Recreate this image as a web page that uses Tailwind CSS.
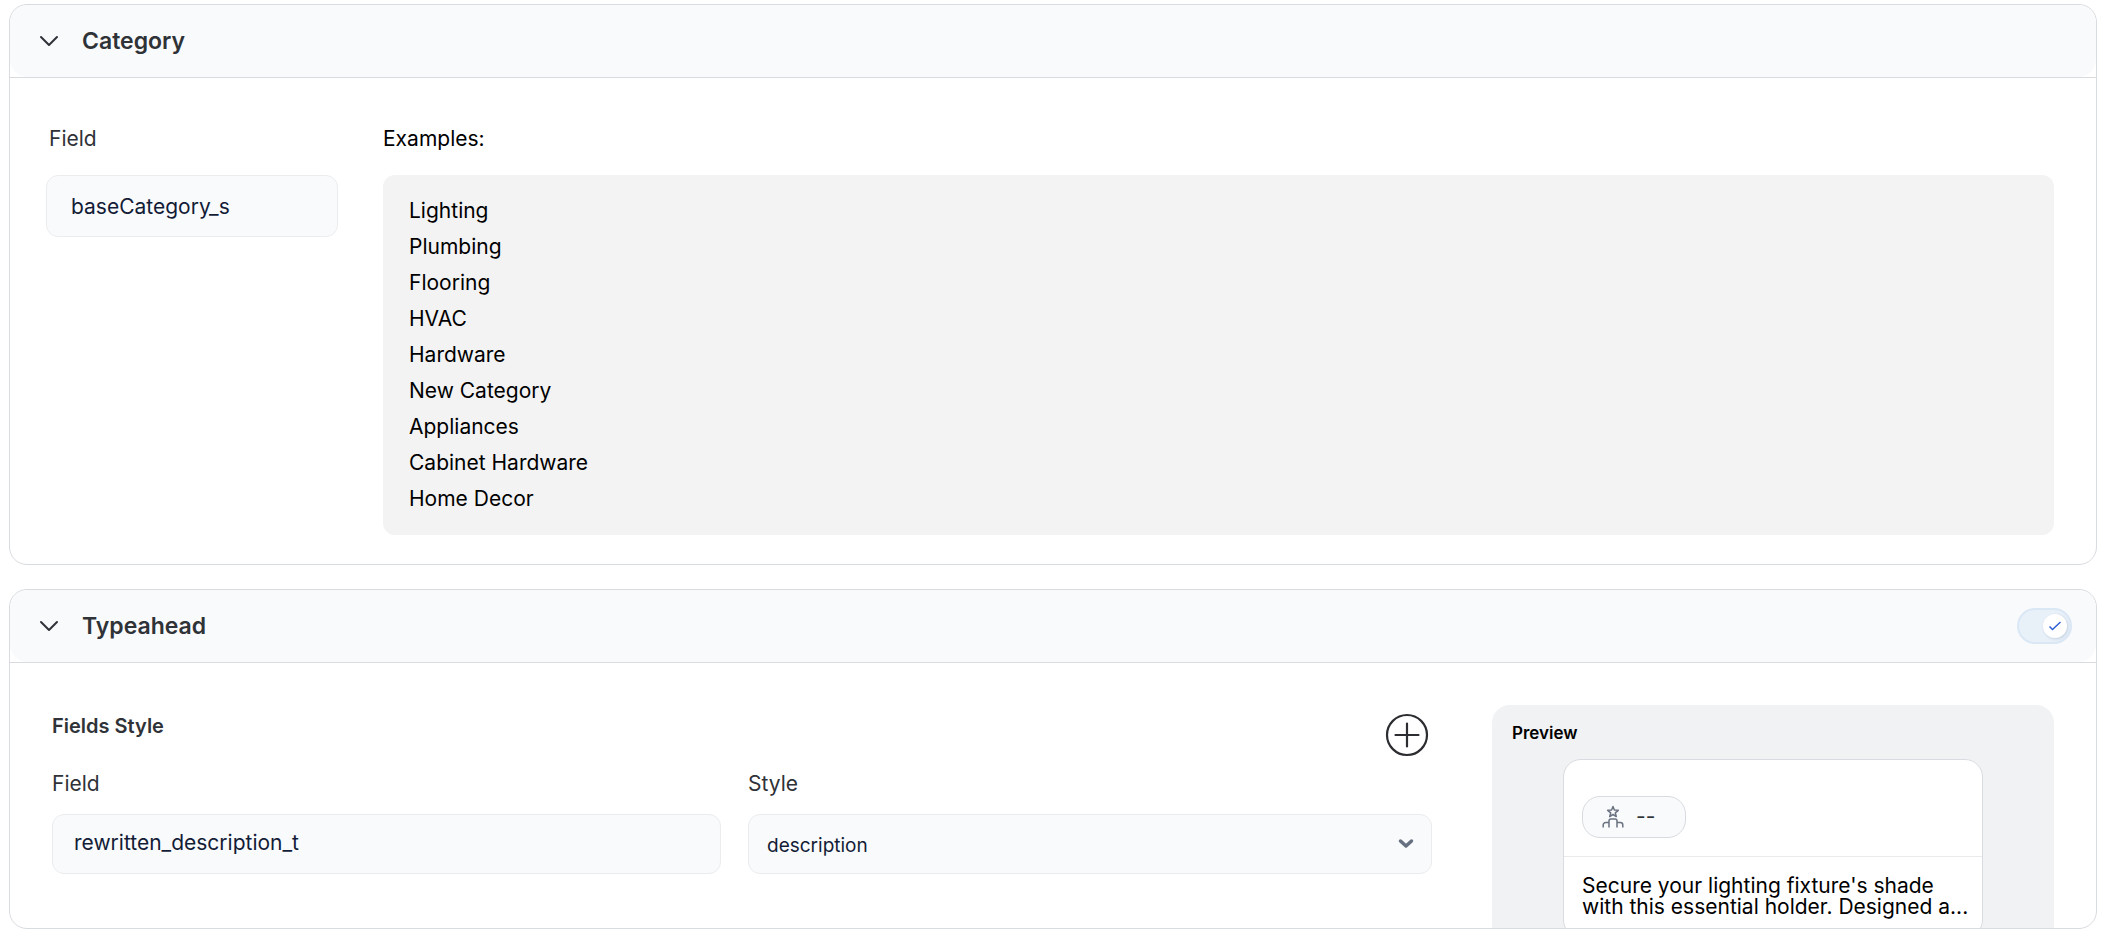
<!DOCTYPE html>
<html lang="en">
<head>
  <meta charset="UTF-8" />
  <meta name="viewport" content="width=device-width, initial-scale=1.0" />
  <title>Field Settings</title>
  <script src="https://cdn.jsdelivr.net/npm/@tailwindcss/browser@4"></script>
</head>
<body class="bg-white font-['Inter',sans-serif] text-[21px] text-black">
  <main class="flex flex-col gap-6 pt-1 pl-[9px] pr-[15px]">

    <!-- Category -->
    <section class="border border-[#d8dbdf] rounded-[18px] overflow-hidden">
      <div class="border-b border-[#d8dbdf]">
        <header class="h-[72px] flex items-center gap-[23px] pl-[29px] pr-6 bg-[#f9fafc] rounded-[18px]">
          <button type="button" aria-label="Collapse Category" aria-expanded="true">
            <svg class="w-5 h-5" viewBox="0 0 20 20" fill="none" stroke="#2f3237" stroke-width="2" stroke-linecap="round" stroke-linejoin="round">
              <path d="M2 6l8 8 8-8" />
            </svg>
          </button>
          <h2 class="text-[23px] font-semibold text-[#2f3237]">Category</h2>
        </header>
      </div>

      <div class="grid grid-cols-[292px_1fr] gap-x-[45px] pt-[45px] pl-9 pr-[42px] pb-[29px]">
        <div class="flex flex-col gap-5">
          <label for="category-field" class="pl-[3px] leading-8 text-[#2f3237]">Field</label>
          <input id="category-field" type="text" value="baseCategory_s" class="w-full h-[62px] pl-6 pr-4 rounded-xl border border-[#ebecee] bg-[#f9fafc] text-[#131c36]" />
        </div>
        <div class="flex flex-col gap-5">
          <h3 class="leading-8">Examples:</h3>
          <ul class="py-[18px] px-[26px] rounded-xl bg-[#f3f3f3] leading-9">
            <li>Lighting</li>
            <li>Plumbing</li>
            <li>Flooring</li>
            <li>HVAC</li>
            <li>Hardware</li>
            <li>New Category</li>
            <li>Appliances</li>
            <li>Cabinet Hardware</li>
            <li>Home Decor</li>
          </ul>
        </div>
      </div>
    </section>

    <!-- Typeahead -->
    <section class="max-h-[340px] border border-[#d8dbdf] rounded-[18px] overflow-hidden">
      <div class="border-b border-[#d8dbdf]">
        <header class="h-[72px] flex items-center gap-[23px] pl-[29px] pr-6 bg-[#f9fafc] rounded-[18px]">
          <button type="button" aria-label="Collapse Typeahead" aria-expanded="true">
            <svg class="w-5 h-5" viewBox="0 0 20 20" fill="none" stroke="#2f3237" stroke-width="2" stroke-linecap="round" stroke-linejoin="round">
              <path d="M2 6l8 8 8-8" />
            </svg>
          </button>
          <h2 class="text-[23px] font-semibold text-[#2f3237]">Typeahead</h2>
          <label class="ml-auto w-[55px] h-9 flex items-center justify-end pr-[3px] rounded-full border-2 border-[#dae7f5] bg-[#e8f0f8] cursor-pointer">
            <input type="checkbox" checked aria-label="Enable Typeahead" class="sr-only" />
            <span class="w-6 h-6 flex items-center justify-center rounded-full bg-white shadow-[1px_1px_3px_#c3d0e2]">
              <svg class="w-3 h-3" viewBox="0 0 12 12" fill="none" stroke="#2f5fd7" stroke-width="1.500">
                <path d="M.5 6.500l3 3 8-7.500" />
              </svg>
            </span>
          </label>
        </header>
      </div>

      <div class="grid grid-cols-[1fr_562px] gap-[60px] pt-[42px] pl-[42px] pr-[42px]">
        <div>
          <div class="flex items-start justify-between pr-[3px]">
            <h3 class="leading-[42px] font-semibold text-[20px] text-[#2f3237]">Fields Style</h3>
            <button type="button" aria-label="Add field" class="mt-2">
              <svg class="w-11 h-11" viewBox="0 0 44 44" fill="none" stroke="#2b2d31" stroke-width="2.200" stroke-linecap="round">
                <circle cx="22" cy="22" r="20" />
                <path d="M22 10.500v23M10.500 22h23" />
              </svg>
            </button>
          </div>
          <div class="mt-[11px] grid grid-cols-[669fr_684fr] gap-x-[27px]">
            <div class="flex flex-col gap-3.5">
              <label for="typeahead-field" class="leading-8 text-[#2f3237]">Field</label>
              <input id="typeahead-field" type="text" value="rewritten_description_t" class="w-full h-[60px] pl-[21px] pr-4 pb-1 rounded-xl border border-[#ebecee] bg-[#f9fafc] text-[#131c36]" />
            </div>
            <div class="flex flex-col gap-3.5">
              <label for="typeahead-style" class="leading-8 text-[#2f3237]">Style</label>
              <div class="relative">
                <select id="typeahead-style" class="appearance-none w-full h-[60px] pl-[18px] pr-12 pt-1 rounded-xl border border-[#ebecee] bg-[#f9fafc] text-[19px] text-[#131c36]">
                  <option>description</option>
                </select>
                <svg class="absolute right-[18px] top-5 w-4 h-5 pointer-events-none" viewBox="0 0 16 20" fill="none" stroke="#667080" stroke-width="3.500" stroke-linecap="round" stroke-linejoin="round">
                  <path d="M2.500 7l5.500 5 5.500-5" />
                </svg>
              </div>
            </div>
          </div>
        </div>

        <aside class="px-5 pt-[14px] pb-10 rounded-t-[18px] bg-[#f1f2f4]">
          <h3 class="leading-7 text-[17px] font-semibold">Preview</h3>
          <div class="mt-3 mx-auto w-[420px] border border-[#d8dbdf] rounded-[18px] bg-white">
            <div class="pt-9 px-[18px] pb-[18px] border-b border-[#e9eaec]">
              <div class="w-[104px] h-[42px] pl-[19px] flex items-center gap-3 rounded-[18px] border border-[#d8dbdf] bg-[#f9fafc]">
                <svg class="w-[22px] h-6" viewBox="0 0 22 24" fill="none" stroke="#6a7280" stroke-width="1.500" stroke-linejoin="round">
                  <path d="M11 1.500l1.400 3.600 3.900.2-3 2.500 1 3.800L11 9.500l-3.300 2.100 1-3.800-3-2.500 3.900-.2z" />
                  <path d="M7 22.500v-6.500a2 2 0 0 1 2-2h4a2 2 0 0 1 2 2v6.500" />
                  <path d="M1.200 22.500v-2.500a2.500 2.500 0 0 1 2.500-2.500H7M20.800 22.500v-2.500a2.500 2.500 0 0 0-2.500-2.500H15" />
                </svg>
                <span class="text-[#2f3237]">--</span>
              </div>
            </div>
            <p class="pt-[18px] pl-[18px] pr-2 pb-5 leading-[21px]">Secure your lighting fixture's shade with this essential holder. Designed a...</p>
          </div>
        </aside>
      </div>
    </section>

  </main>
</body>
</html>
